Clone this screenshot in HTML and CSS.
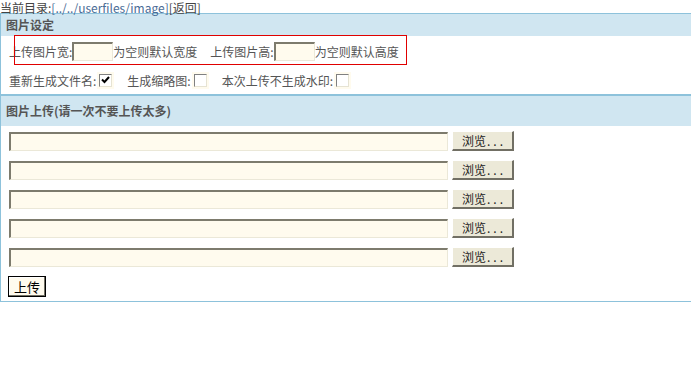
FILE: index.html
```html
<!DOCTYPE html>
<html lang="zh-CN">
<head>
    <meta charset="UTF-8">
    <title>图片上传</title>
    <link rel="stylesheet" href="styles.css">
</head>
<body>
    <div class="curdir">当前目录:<span class="path">[../../userfiles/image]</span>[返回]</div>

    <div class="panel">
        <div class="panel-head">图片设定</div>

        <div class="size-row">
            <span class="red-box"></span>
            上传图片宽:<input type="text" class="num">为空则默认宽度
            <span class="gap">上传图片高:</span><input type="text" class="num">为空则默认高度
        </div>

        <div class="opt-row">
            <label class="opt">重新生成文件名:<span class="chk"><svg width="9" height="8" viewBox="0 0 9 8"><path d="M1 3.5 L3.5 6 L8 1" fill="none" stroke="#000" stroke-width="2"/></svg></span></label>
            <label class="opt">生成缩略图:<span class="chk"></span></label>
            <label class="opt">本次上传不生成水印:<span class="chk"></span></label>
        </div>

        <div class="panel-head big">图片上传(请一次不要上传太多)</div>

        <div class="files">
            <div class="file-row"><input type="text" class="path-box"><button class="browse">浏览<span class="dots">...</span></button></div>
            <div class="file-row"><input type="text" class="path-box"><button class="browse">浏览<span class="dots">...</span></button></div>
            <div class="file-row"><input type="text" class="path-box"><button class="browse">浏览<span class="dots">...</span></button></div>
            <div class="file-row"><input type="text" class="path-box"><button class="browse">浏览<span class="dots">...</span></button></div>
            <div class="file-row"><input type="text" class="path-box"><button class="browse">浏览<span class="dots">...</span></button></div>
        </div>

        <div class="submit-row"><button class="upload">上传</button></div>
    </div>
</body>
</html>
```

FILE: styles.css
```css
body {
    margin: 0;
    font-family: "Noto Sans CJK SC", "Liberation Sans", sans-serif;
    font-size: 12px;
    color: #555;
    background: #fff;
}
.curdir {
    height: 13px;
    line-height: 15px;
    color: #444;
    white-space: nowrap;
}
.curdir .path {
    color: #4a6c96;
}
.panel {
    border: 1px solid #8dc2db;
    border-right: none;
}
.panel-head {
    height: 22px;
    line-height: 22px;
    padding-left: 5px;
    background-color: #d0e6f1;
    font-weight: bold;
    color: #555;
}
.panel-head.big {
    height: 30px;
    line-height: 30px;
    border-top: 2px solid #8dc2db;
}
.size-row {
    position: relative;
    height: 30px;
    display: flex;
    align-items: center;
    padding-left: 8px;
    white-space: nowrap;
}
.red-box {
    position: absolute;
    left: 13px;
    top: -1px;
    width: 391px;
    height: 28px;
    border: 1px solid #e00000;
}
.size-row .gap {
    margin-left: 13px;
}
input[type=text] {
    box-sizing: border-box;
    height: 19px;
    margin: 0;
    padding: 0 2px;
    background-color: #fffbee;
    border-style: solid;
    border-width: 2px 1px 1px 2px;
    border-color: #7d7b6d #ebe8d8 #ebe8d8 #7d7b6d;
    font: inherit;
}
input.num {
    width: 41px;
}
.opt-row {
    height: 28px;
    display: flex;
    align-items: center;
    padding-left: 8px;
    gap: 15px;
    white-space: nowrap;
}
.opt {
    display: flex;
    align-items: center;
}
.chk {
    display: inline-flex;
    align-items: center;
    justify-content: center;
    box-sizing: border-box;
    width: 13px;
    height: 13px;
    margin-left: 3px;
    background-color: #fff;
    border-style: solid;
    border-width: 1px;
    border-color: #808080 #e6e3d3 #e6e3d3 #808080;
    box-shadow: 0 0 0 2px #fffbee;
}
.files {
    padding: 5px 0 0 8px;
}
.file-row {
    display: flex;
    align-items: center;
    gap: 4px;
    height: 20px;
    margin-bottom: 9px;
}
input.path-box {
    width: 439px;
}
.browse {
    box-sizing: border-box;
    width: 62px;
    height: 20px;
    padding: 0 0 0 3px;
    background-color: #ece9d8;
    border-style: solid;
    border-width: 1px 2px 2px 1px;
    border-color: #fff #716f64 #716f64 #fff;
    font: inherit;
    color: #222;
}
.browse .dots {
    letter-spacing: 3px;
    margin-left: 1px;
}
.submit-row {
    padding: 0 0 4px 7px;
}
.upload {
    box-sizing: border-box;
    height: 21px;
    width: 38px;
    padding: 0;
    background-color: #fffbee;
    border: 1px solid #000;
    box-shadow: inset -1px -1px 0 #716f64, inset 1px 1px 0 #fff;
    font: inherit;
    font-size: 13px;
    color: #000;
}
```
